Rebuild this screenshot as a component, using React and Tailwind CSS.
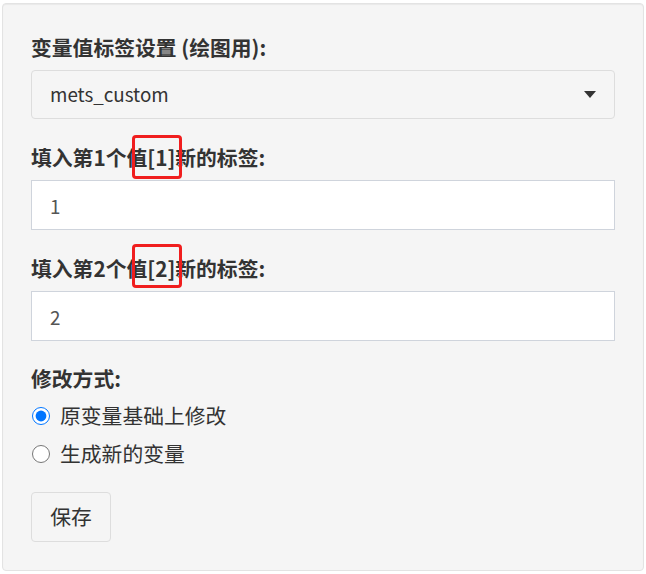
import React, { useState } from 'react';

const font = { fontFamily: '"Noto Sans CJK SC", "Noto Sans", sans-serif' };

const Marked = ({ text, top }) => (
  <span className="relative">
    {text}
    <span className={`absolute ${top} left-[-15px] w-[50px] h-[44px] border-[3px] border-[#f01e1e] rounded-[4px]`} />
  </span>
);

const App = () => {
  const [mode, setMode] = useState('modify');
  const [v1, setV1] = useState('1');
  const [v2, setV2] = useState('2');

  return (
    <div className="min-h-screen bg-white pt-[3px] pl-[2px] text-[#333]" style={font}>
      <div className="w-[642px] h-[568px] bg-[#f5f5f5] border border-[#e3e3e3] rounded-[4px] shadow-[inset_0_1px_1px_rgba(0,0,0,0.05)] pt-[29px] px-[28px]">
        <div className="text-[20.8px] font-bold leading-[28px]">变量值标签设置 (绘图用):</div>
        <div className="mt-[9px] h-[49px] border border-[#ddd] rounded-[4px] bg-[#f5f5f5] flex items-center justify-between pl-[18px] pr-[18px]">
          <span className="text-[18.8px] text-[#333]">mets_custom</span>
          <svg width="12" height="7" viewBox="0 0 12 7"><path d="M0 0h12L6 7z" fill="#333" /></svg>
        </div>

        <div className="mt-[24px] text-[20.8px] font-bold leading-[28px]">
          填入第1个值<Marked text="[1]" top="top-[-7px]" />新的标签:
        </div>
        <input
          value={v1}
          onChange={(e) => setV1(e.target.value)}
          className="mt-[9px] block w-full h-[50px] bg-white border border-[#cfd4dc] px-[18px] text-[18.8px] text-[#555] outline-none"
        />

        <div className="mt-[24px] text-[20.8px] font-bold leading-[28px]">
          填入第2个值<Marked text="[2]" top="top-[-9px]" />新的标签:
        </div>
        <input
          value={v2}
          onChange={(e) => setV2(e.target.value)}
          className="mt-[9px] block w-full h-[50px] bg-white border border-[#cfd4dc] px-[18px] text-[18.8px] text-[#555] outline-none"
        />

        <div className="mt-[23px] text-[20.8px] font-bold leading-[28px]">修改方式:</div>
        <div className="mt-[5px] flex flex-col">
          {[
            ['modify', '原变量基础上修改'],
            ['new', '生成新的变量'],
          ].map(([val, label]) => (
            <label key={val} className="flex items-center h-[38px] gap-[10px] text-[20.8px] cursor-pointer">
              <input
                type="radio"
                name="mode"
                checked={mode === val}
                onChange={() => setMode(val)}
                className="m-0 ml-[1px] w-[18px] h-[18px] accent-[#0075ff]"
              />
              {label}
            </label>
          ))}
        </div>

        <button className="mt-[19px] w-[80px] h-[50px] border border-[#ddd] rounded-[4px] bg-[#f5f5f5] text-[20.8px] text-[#333]">
          保存
        </button>
      </div>
    </div>
  );
};

export default App;
